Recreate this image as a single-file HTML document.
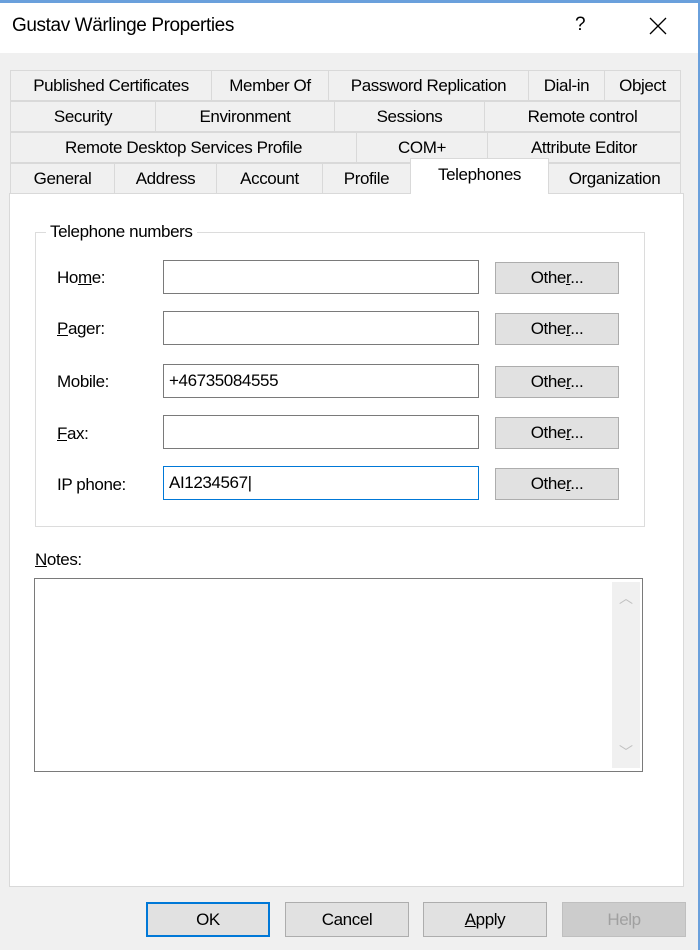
<!DOCTYPE html>
<html><head><meta charset="utf-8"><style>
*{box-sizing:border-box;margin:0;padding:0}
body{width:700px;height:950px;background:#f0f0f0;font-family:"Liberation Sans",sans-serif;font-size:17px;color:#000;position:relative;overflow:hidden;letter-spacing:-0.4px}
.a{position:absolute}
.title{left:0;top:0;width:700px;height:53px;background:#fff;border-top:3px solid #6aa0dc}
.tab{position:absolute;height:31px;border:1px solid #d9d9d9;background:#f0f0f0;text-align:center;line-height:29px;white-space:nowrap}
.sel{background:#fff;border-color:#d9d9d9;border-bottom:none;height:36px;z-index:2}
.inp{position:absolute;left:163px;width:316px;height:34px;background:#fff;border:1px solid #7a7a7a;padding-left:5px;line-height:32px}
.btn{position:absolute;background:#e1e1e1;border:1px solid #adadad;text-align:center}
.o{left:495px;width:124px;height:32px;line-height:30px}
.lbl{position:absolute;left:57px}
u{text-decoration:underline}
.b{top:902px;width:124px;height:35px;line-height:33px}
</style></head><body>
<div class="a title"></div>
<div class="a" style="left:698px;top:0;width:2px;height:950px;background:#6aa0dc"></div>
<div class="a" style="left:12px;top:15px;font-size:19px">Gustav Wärlinge Properties</div>
<div class="a" style="left:575px;top:14px;font-size:19px">?</div>
<svg class="a" style="left:649px;top:17px" width="18" height="18" viewBox="0 0 18 18"><path d="M1 1L17 17M17 1L1 17" stroke="#000" stroke-width="1.3" fill="none"/></svg>

<div class="tab" style="left:10px;top:70px;width:202px">Published Certificates</div>
<div class="tab" style="left:211px;top:70px;width:118px">Member Of</div>
<div class="tab" style="left:328px;top:70px;width:201px">Password Replication</div>
<div class="tab" style="left:528px;top:70px;width:77px">Dial-in</div>
<div class="tab" style="left:604px;top:70px;width:77px">Object</div>

<div class="tab" style="left:10px;top:101px;width:146px">Security</div>
<div class="tab" style="left:155px;top:101px;width:180px">Environment</div>
<div class="tab" style="left:334px;top:101px;width:151px">Sessions</div>
<div class="tab" style="left:484px;top:101px;width:197px">Remote control</div>

<div class="tab" style="left:10px;top:132px;width:347px">Remote Desktop Services Profile</div>
<div class="tab" style="left:356px;top:132px;width:132px">COM+</div>
<div class="tab" style="left:487px;top:132px;width:194px">Attribute Editor</div>

<div class="tab" style="left:10px;top:163px;width:105px">General</div>
<div class="tab" style="left:114px;top:163px;width:103px">Address</div>
<div class="tab" style="left:216px;top:163px;width:107px">Account</div>
<div class="tab" style="left:322px;top:163px;width:89px">Profile</div>
<div class="tab sel" style="left:410px;top:158px;width:139px;line-height:32px">Telephones</div>
<div class="tab" style="left:548px;top:163px;width:133px">Organization</div>

<div class="a" style="left:9px;top:193px;width:675px;height:694px;background:#fff;border:1px solid #d9d9d9"></div>

<div class="a" style="left:35px;top:232px;width:610px;height:295px;border:1px solid #dcdcdc"></div>
<div class="a" style="left:46px;top:222px;background:#fff;padding:0 4px">Telephone numbers</div>

<div class="lbl" style="top:268px">Ho<u>m</u>e:</div>
<div class="inp" style="top:260px"></div>
<div class="btn o" style="top:262px">Othe<u>r</u>...</div>

<div class="lbl" style="top:319px"><u>P</u>ager:</div>
<div class="inp" style="top:311px"></div>
<div class="btn o" style="top:313px">Othe<u>r</u>...</div>

<div class="lbl" style="top:372px">Mobile:</div>
<div class="inp" style="top:364px">+46735084555</div>
<div class="btn o" style="top:366px">Othe<u>r</u>...</div>

<div class="lbl" style="top:424px"><u>F</u>ax:</div>
<div class="inp" style="top:415px"></div>
<div class="btn o" style="top:417px">Othe<u>r</u>...</div>

<div class="lbl" style="top:475px">IP phone:</div>
<div class="inp" style="top:466px;border-color:#0078d7">AI1234567|</div>
<div class="btn o" style="top:468px">Othe<u>r</u>...</div>

<div class="a" style="left:35px;top:550px"><u>N</u>otes:</div>
<div class="a" style="left:34px;top:578px;width:609px;height:194px;border:1px solid #7a7a7a;background:#fff"></div>
<div class="a" style="left:612px;top:582px;width:28px;height:186px;background:#f0f0f0"></div>
<div class="a" style="left:619px;top:588px;color:#c0c0c0;font-size:14px">︿</div>
<div class="a" style="left:619px;top:742px;color:#c0c0c0;font-size:14px">﹀</div>

<div class="btn b" style="left:146px;border:2px solid #0078d7;line-height:31px">OK</div>
<div class="btn b" style="left:285px">Cancel</div>
<div class="btn b" style="left:423px"><u>A</u>pply</div>
<div class="btn b" style="left:562px;background:#cccccc;border-color:#bfbfbf;color:#a0a0a0">Help</div>
</body></html>
